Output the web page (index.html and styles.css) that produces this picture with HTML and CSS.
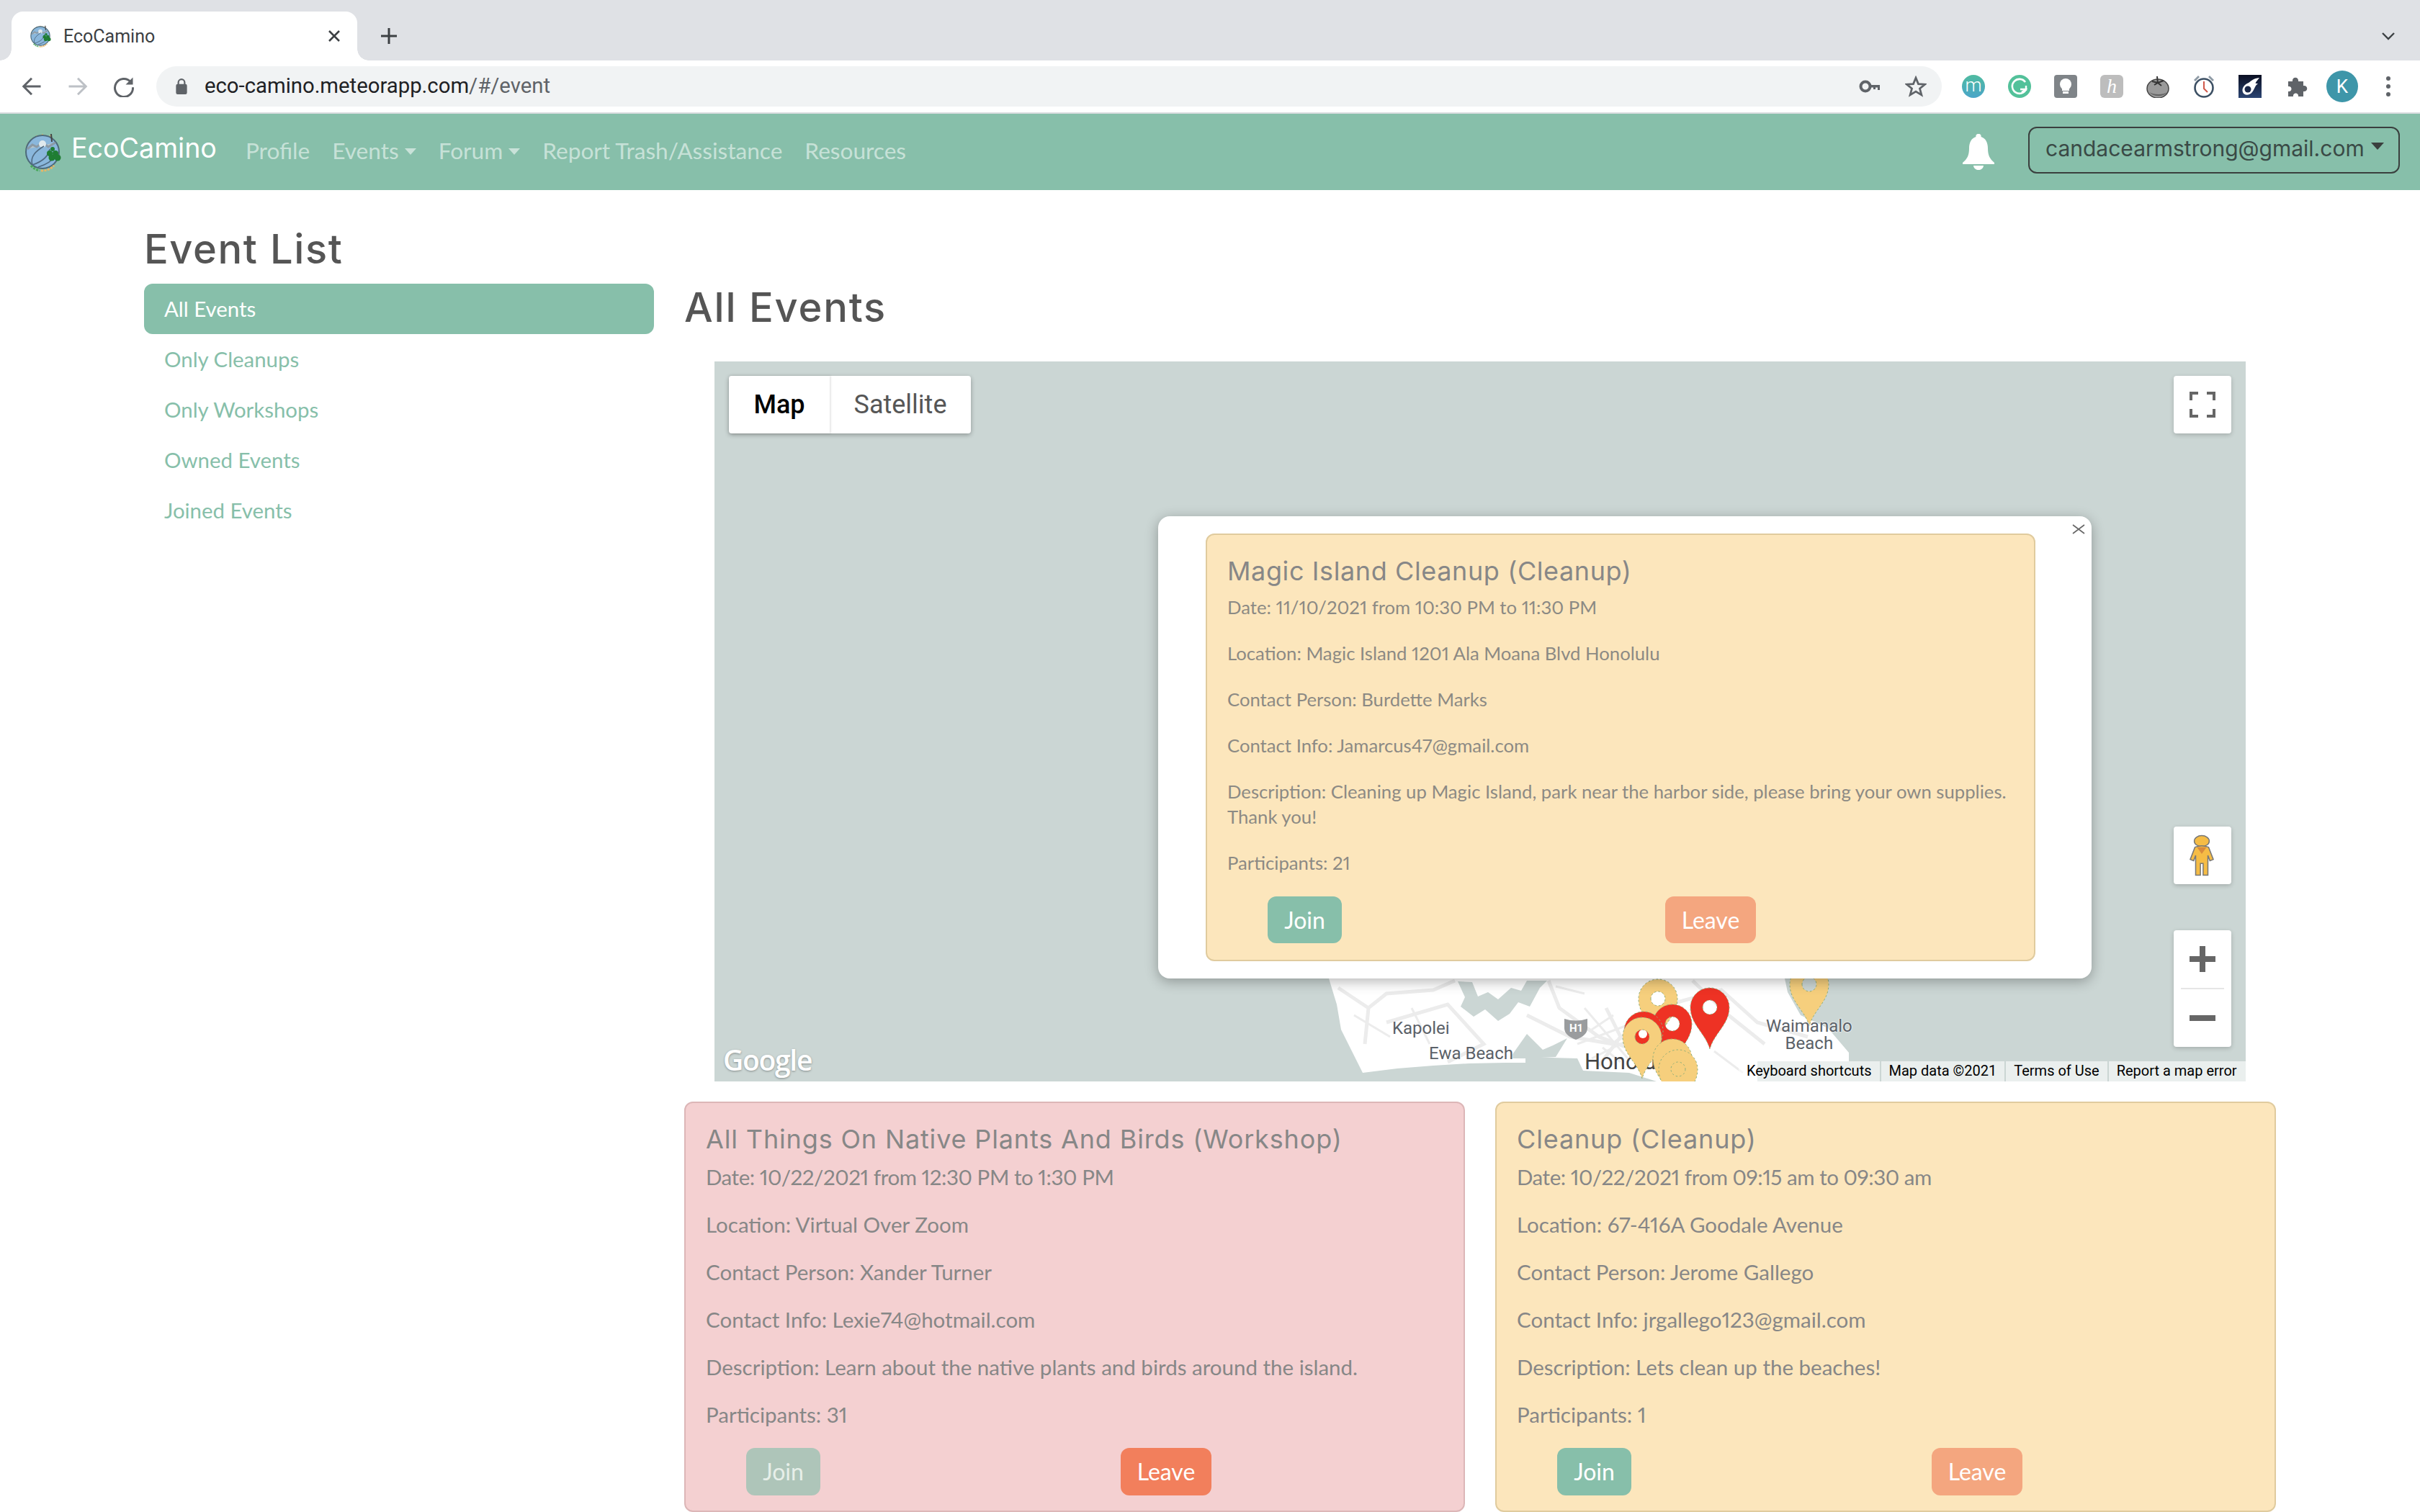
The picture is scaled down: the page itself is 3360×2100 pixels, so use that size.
FILE: index.html
```html
<!DOCTYPE html>
<html lang="en">
<head>
<meta charset="utf-8">
<title>EcoCamino</title>
<link rel="stylesheet" href="styles.css">
</head>
<body>
<svg class="defs" width="0" height="0" aria-hidden="true">
  <defs>
    <symbol id="logo" viewBox="0 0 56 56">
      <path d="M10 17 L14 9 M18 12 L20 5 M27 11 L28 3 M35 12 L39 5" stroke="#e0b96a" stroke-width="1.6" fill="none"/>
      <path d="M6 22 A24 24 0 0 1 38 8" stroke="#d9bd7e" stroke-width="3" fill="none"/>
      <circle cx="28" cy="28" r="23" fill="#8ab7dc" stroke="#4d6a7a" stroke-width="2"/>
      <path d="M7 24 L14 18 L20 21 L28 15 L36 21 L46 15" stroke="#8b9aa6" stroke-width="3" fill="#b9c5c8"/>
      <circle cx="28" cy="17" r="5" fill="#dfe9ee"/>
      <path d="M14 46 C10 34 20 26 30 20 M14 46 C26 42 36 36 38 24 M22 49 C32 46 44 40 44 32" stroke="#4f6a82" stroke-width="1.6" fill="none"/>
      <path d="M40 3 L41 14" stroke="#444" stroke-width="2"/>
      <circle cx="38" cy="30" r="4" fill="#1f7d33"/><circle cx="46" cy="30" r="4" fill="#1f7d33"/>
      <circle cx="42" cy="24" r="3" fill="#1f7d33"/><circle cx="41" cy="36" r="4.5" fill="#1f7d33"/><circle cx="49" cy="36" r="4.5" fill="#1f7d33"/>
      <path d="M12 47 A22 22 0 0 0 24 54" stroke="#49a85a" stroke-width="3" stroke-dasharray="3 1.5" fill="none"/>
      <path d="M26 54 A22 22 0 0 0 44 47" stroke="#e7b565" stroke-width="3" stroke-dasharray="3 1.5" fill="none"/>
    </symbol>
  </defs>
</svg>

<div class="tabstrip">
  <div class="tab">
    <svg class="favicon"><use href="#logo"/></svg>
    <span class="tab-title">EcoCamino</span>
    <svg class="tab-close" viewBox="0 0 20 20"><path d="M3 3 L17 17 M17 3 L3 17" stroke="#3c4043" stroke-width="2.6"/></svg>
  </div>
  <svg class="new-tab" viewBox="0 0 24 24"><path d="M12 1 V23 M1 12 H23" stroke="#3c4043" stroke-width="3"/></svg>
  <svg class="tab-menu" viewBox="0 0 20 12"><path d="M2 2 L10 10 L18 2" stroke="#3c4043" stroke-width="2.4" fill="none"/></svg>
</div>

<div class="toolbar">
  <div class="tool"><svg class="tool-icon" viewBox="0 0 24 24"><path d="M22 12 H4 M12 3 L3 12 L12 21" stroke="#5f6368" stroke-width="2.4" fill="none"/></svg></div>
  <div class="tool"><svg class="tool-icon" viewBox="0 0 24 24"><path d="M2 12 H20 M12 3 L21 12 L12 21" stroke="#bdc1c6" stroke-width="2.4" fill="none"/></svg></div>
  <div class="tool"><svg class="tool-icon" viewBox="0 0 24 24"><path d="M19.5 7 A10 10 0 1 0 22 13" stroke="#5f6368" stroke-width="2.4" fill="none"/><path d="M22 2 V10 H14 Z" fill="#5f6368"/></svg></div>
  <div class="omnibox">
    <svg class="lock" viewBox="0 0 16 22"><path d="M4 9 V6 A4 4 0 0 1 12 6 V9" stroke="#5f6368" stroke-width="2" fill="none"/><rect x="1" y="8" width="14" height="13" rx="2" fill="#5f6368"/></svg>
    <span class="url">eco-camino.meteorapp.com<span class="url-dim">/#/event</span></span>
    <div class="tool omni-first"><svg class="tool-icon" viewBox="0 0 30 24"><circle cx="9" cy="12" r="6.5" stroke="#5f6368" stroke-width="4" fill="none"/><path d="M15 10 H29 V17 H26 V13.5 H23 V16 H20 V13.5 H15 Z" fill="#5f6368"/></svg></div>
    <div class="tool"><svg class="tool-icon" viewBox="0 0 24 24"><path d="M12 2.5 L14.8 9.3 L22 9.8 L16.4 14.4 L18.3 21.5 L12 17.6 L5.7 21.5 L7.6 14.4 L2 9.8 L9.2 9.3 Z" stroke="#5f6368" stroke-width="2.2" fill="none"/></svg></div>
  </div>
  <div class="exts">
    <div class="tool"><span class="ext ext-m">m</span></div>
    <div class="tool"><span class="ext ext-g"><svg viewBox="0 0 32 32"><path d="M24 10 A10 10 0 1 0 25 20 H17" stroke="#fff" stroke-width="2.6" fill="none"/><path d="M25 15 V22 M19 24 L25 20" stroke="#fff" stroke-width="2.4" fill="none"/></svg></span></div>
    <div class="tool"><span class="ext ext-bulb"><svg viewBox="0 0 32 32"><circle cx="16" cy="13" r="8" fill="#fff"/><rect x="11" y="19" width="10" height="3" fill="#fff"/><rect x="12" y="23" width="8" height="3" fill="#fff"/></svg></span></div>
    <div class="tool"><span class="ext ext-h">h</span></div>
    <div class="tool"><svg class="ext" viewBox="0 0 32 32"><ellipse cx="16" cy="19" rx="15" ry="13" fill="#9a9a9a" stroke="#444" stroke-width="1.5"/><path d="M4 24 C10 31 24 31 29 24 C24 28 10 28 4 24Z" fill="#666"/><path d="M15 2 L16 12 M8 9 L16 11 L24 8 M11 14 L16 11 L21 15" stroke="#333" stroke-width="2" fill="none"/></svg></div>
    <div class="tool"><svg class="ext" viewBox="0 0 32 32"><path d="M2 7 L8 1 L10 3 L4 9 Z M30 7 L24 1 L22 3 L28 9 Z" fill="#8f9ba6"/><circle cx="16" cy="18" r="12.5" fill="#fff" stroke="#3d5064" stroke-width="2.6"/><path d="M16 9 V19 L21 24" stroke="#d0584a" stroke-width="2" fill="none"/></svg></div>
    <div class="tool"><svg class="ext" viewBox="0 0 32 32"><defs><linearGradient id="night" x1="0" y1="0" x2="0" y2="1"><stop offset="0" stop-color="#0b0f22"/><stop offset="1" stop-color="#2b4472"/></linearGradient></defs><rect width="32" height="32" fill="url(#night)"/><path d="M29 4 C21 5 18 8 14 11 C8 13 4 19 6 24 C8 29 15 29 19 24 C23 19 22 16 27 12 C23 12 23 12 25 9 Z" fill="#fff"/><circle cx="13" cy="20" r="4.5" fill="#1a2748"/></svg></div>
    <div class="tool"><svg class="ext" viewBox="0 0 32 32"><path d="M5 9 H11 C10 2 20 2 19 9 H26 V15 C33 14 33 24 26 23 V30 H19 C20 24 11 24 12 30 H5 V23 C11 24 11 15 5 16 Z" fill="#5f6368"/></svg></div>
    <div class="tool"><span class="avatar">K</span></div>
    <div class="tool"><svg class="dots" viewBox="0 0 8 32"><circle cx="4" cy="5" r="3" fill="#5f6368"/><circle cx="4" cy="16" r="3" fill="#5f6368"/><circle cx="4" cy="27" r="3" fill="#5f6368"/></svg></div>
  </div>
</div>

<nav class="navbar">
  <svg class="brand-logo"><use href="#logo"/></svg>
  <span class="brand">EcoCamino</span>
  <div class="nav-links">
    <span class="nav-link">Profile</span>
    <span class="nav-link caret">Events</span>
    <span class="nav-link caret">Forum</span>
    <span class="nav-link">Report Trash/Assistance</span>
    <span class="nav-link">Resources</span>
  </div>
  <svg class="bell" viewBox="0 0 44 50"><path d="M22 0 C25 0 26 2 25.5 4 C32 6 35 12 35 20 C35 30 38 35 44 40 V42 H0 V40 C6 35 9 30 9 20 C9 12 12 6 18.5 4 C18 2 19 0 22 0 Z" fill="#fff"/><path d="M15 44 H29 C28 52 16 52 15 44 Z" fill="#fff"/></svg>
  <div class="account caret-dark"><span class="account-name">candacearmstrong@gmail.com</span></div>
</nav>

<main class="page">
  <aside class="sidebar">
    <h1 class="side-title">Event List</h1>
    <div class="side-item is-active">All Events</div>
    <div class="side-item">Only Cleanups</div>
    <div class="side-item">Only Workshops</div>
    <div class="side-item">Owned Events</div>
    <div class="side-item">Joined Events</div>
  </aside>

  <section class="content">
    <h2 class="content-title">All Events</h2>
    <div class="map">
      <svg class="map-art" viewBox="992 502 2126 1000">
        <path class="land" d="M1845 1359 L1856 1395 L1862 1430 L1878 1462 L1892 1490 L1940 1484 L1990 1480 L2040 1477 L2090 1476 L2118 1476 L2118 1468 L2190 1470 L2198 1487 L2262 1490 L2300 1502 L2440 1502 L2440 1474 L2567 1474 L2567 1462 L2538 1428 L2500 1410 L2482 1378 L2478 1359 Z"/>
        <path class="water" d="M2024 1363 L2034 1385 L2028 1398 L2046 1412 L2062 1402 L2080 1418 L2096 1408 L2108 1392 L2124 1398 L2138 1372 L2148 1362 L2120 1362 L2112 1376 L2098 1372 L2080 1388 L2066 1378 L2052 1384 L2044 1364 Z"/>
        <path class="water" d="M2120 1436 L2096 1470 L2118 1470 L2160 1468 L2176 1442 L2156 1452 L2142 1458 L2134 1450 Z"/>
        <path class="road" d="M1858 1372 L1900 1400 L1925 1380 L1990 1375 L2020 1362 M1900 1400 L1895 1450 M1925 1420 L2010 1395 L2060 1450 L2010 1475 M2150 1362 L2165 1400 L2220 1440 L2300 1470 M2120 1410 L2180 1440 L2240 1450 L2300 1400 L2390 1375 L2440 1420 L2510 1440 M2230 1400 L2250 1440 L2220 1480 M2350 1362 L2400 1410 L2450 1450"/>
        <path class="road-thin" d="M2200 1400 L2260 1470 M2190 1450 L2270 1420 M2210 1470 L2290 1430 M2160 1370 L2200 1380 M2380 1460 L2420 1490 M2210 1430 L2240 1410 M2225 1455 L2250 1475 M1880 1410 L1930 1440 M1960 1400 L1985 1450"/>
        <path class="shield" d="M2172 1415 Q2188 1420 2204 1415 L2204 1428 Q2204 1438 2188 1444 Q2172 1438 2172 1428 Z"/>
        <path class="pin pin-yellow" fill-rule="evenodd" d="M2512 1425 C2506 1403 2485 1391 2485 1367 A27 27 0 1 1 2539 1367 C2539 1391 2518 1403 2512 1425 Z M2502 1367 A10 10 0 1 0 2522 1367 A10 10 0 1 0 2502 1367 Z"/>
        <path class="pin pin-yellow" fill-rule="evenodd" d="M2302 1445 C2296 1423 2275 1411 2275 1387 A27 27 0 1 1 2329 1387 C2329 1411 2308 1423 2302 1445 Z M2292 1387 A10 10 0 1 0 2312 1387 A10 10 0 1 0 2292 1387 Z"/>
        <path class="pin pin-red" fill-rule="evenodd" d="M2322 1480 C2316 1458 2295 1446 2295 1422 A27 27 0 1 1 2349 1422 C2349 1446 2328 1458 2322 1480 Z M2312 1422 A10 10 0 1 0 2332 1422 A10 10 0 1 0 2312 1422 Z"/>
        <path class="pin pin-red" fill-rule="evenodd" d="M2374 1457 C2368 1435 2347 1423 2347 1399 A27 27 0 1 1 2401 1399 C2401 1423 2380 1435 2374 1457 Z M2364 1399 A10 10 0 1 0 2384 1399 A10 10 0 1 0 2364 1399 Z"/>
        <path class="pin pin-red" d="M2282 1490 C2276 1468 2255 1456 2255 1432 A27 27 0 1 1 2309 1432 C2309 1456 2288 1468 2282 1490 Z"/>
        <circle cx="2281" cy="1436" r="6" fill="#fff"/>
      </svg>
      <span class="map-label label-kapolei">Kapolei</span>
      <span class="map-label label-ewa">Ewa Beach</span>
      <span class="label-h1">H1</span>
      <span class="map-label label-waima">Waimanalo<br>Beach</span>
      <span class="map-label label-hono">Honolulu</span>
      <svg class="map-art map-over" viewBox="992 502 2126 1000">
        <path class="pin pin-yellow" fill-rule="evenodd" d="M2280 1498 C2274 1476 2253 1464 2253 1440 A27 27 0 1 1 2307 1440 C2307 1464 2286 1476 2280 1498 Z M2270 1440 A10 10 0 1 0 2290 1440 A10 10 0 1 0 2270 1440 Z"/>
        <path class="pin pin-yellow" d="M2322 1528 C2316 1506 2295 1494 2295 1470 A27 27 0 1 1 2349 1470 C2349 1494 2328 1506 2322 1528 Z"/>
        <path class="pin pin-yellow" d="M2330 1543 C2324 1521 2303 1509 2303 1485 A27 27 0 1 1 2357 1485 C2357 1509 2336 1521 2330 1543 Z"/>
        <circle class="pin-ring" cx="2330" cy="1485" r="10"/>
        <path d="M2237 1359 L2277 1359 L2257 1381 Z" fill="#fff"/>
      </svg>

      <div class="map-type">
        <span class="map-type-btn is-on">Map</span>
        <span class="map-type-btn">Satellite</span>
      </div>
      <div class="map-btn fullscreen">
        <svg viewBox="0 0 36 36"><path d="M2 12 V2 H12 M24 2 H34 V12 M2 24 V34 H12 M34 24 V34 H24" stroke="#666" stroke-width="4" fill="none"/></svg>
      </div>
      <div class="map-btn pegman">
        <svg viewBox="0 0 36 60"><ellipse cx="18" cy="9" rx="11" ry="8" fill="#f5bc45" stroke="#777" stroke-width="1.6"/><path d="M8 18 Q18 14 28 18 L35 36 L30 38 L27 30 L27 59 H20 V42 H16 V59 H9 V30 L6 38 L1 36 Z" fill="#f5bc45" stroke="#777" stroke-width="1.6"/><path d="M11 18 L18 28 L25 18 Z" fill="#d98b3c"/></svg>
      </div>
      <div class="map-zoom">
        <div class="zoom-part"><svg viewBox="0 0 36 36"><rect x="14" y="0" width="8" height="36" fill="#666"/><rect x="0" y="14" width="36" height="8" fill="#666"/></svg></div>
        <div class="zoom-line"></div>
        <div class="zoom-part"><svg viewBox="0 0 36 36"><rect x="0" y="14" width="36" height="8" fill="#666"/></svg></div>
      </div>
      <span class="google">Google</span>
      <div class="attrib">
        <span class="attrib-item">Keyboard shortcuts</span>
        <span class="attrib-item">Map data ©2021</span>
        <span class="attrib-item">Terms of Use</span>
        <span class="attrib-item">Report a map error</span>
      </div>

      <div class="popup">
        <svg class="popup-close" viewBox="0 0 20 14"><path d="M2 1 L18 13 M18 1 L2 13" stroke="#666" stroke-width="1.6"/></svg>
        <article class="card card-yellow card-popup">
          <h3 class="card-title">Magic Island Cleanup (Cleanup)</h3>
          <p class="card-line">Date: 11/10/2021 from 10:30 PM to 11:30 PM</p>
          <p class="card-line">Location: Magic Island 1201 Ala Moana Blvd Honolulu</p>
          <p class="card-line">Contact Person: Burdette Marks</p>
          <p class="card-line">Contact Info: Jamarcus47@gmail.com</p>
          <p class="card-line">Description: Cleaning up Magic Island, park near the harbor side, please bring your own supplies. Thank you!</p>
          <p class="card-line">Participants: 21</p>
          <div class="actions">
            <span class="btn btn-join">Join</span>
            <span class="btn btn-leave btn-soft">Leave</span>
          </div>
        </article>
      </div>
    </div>

    <div class="cards">
      <article class="card card-pink">
        <h3 class="card-title">All Things On Native Plants And Birds (Workshop)</h3>
        <p class="card-line card-date">Date: 10/22/2021 from 12:30 PM to 1:30 PM</p>
        <p class="card-line">Location: Virtual Over Zoom</p>
        <p class="card-line">Contact Person: Xander Turner</p>
        <p class="card-line">Contact Info: Lexie74@hotmail.com</p>
        <p class="card-line">Description: Learn about the native plants and birds around the island.</p>
        <p class="card-line">Participants: 31</p>
        <div class="actions">
          <span class="btn btn-join btn-muted">Join</span>
          <span class="btn btn-leave">Leave</span>
        </div>
      </article>
      <article class="card card-yellow">
        <h3 class="card-title">Cleanup (Cleanup)</h3>
        <p class="card-line card-date">Date: 10/22/2021 from 09:15 am to 09:30 am</p>
        <p class="card-line">Location: 67-416A Goodale Avenue</p>
        <p class="card-line">Contact Person: Jerome Gallego</p>
        <p class="card-line">Contact Info: jrgallego123@gmail.com</p>
        <p class="card-line">Description: Lets clean up the beaches!</p>
        <p class="card-line">Participants: 1</p>
        <div class="actions">
          <span class="btn btn-join">Join</span>
          <span class="btn btn-leave btn-soft">Leave</span>
        </div>
      </article>
    </div>
  </section>
</main>
</body>
</html>
```

FILE: styles.css
```css
* { box-sizing: border-box; }
html, body { margin: 0; padding: 0; }
body {
  width: 3360px;
  height: 2100px;
  overflow: hidden;
  background: #fff;
  font-family: "Lato", "Open Sans", sans-serif;
  font-variant-numeric: proportional-nums;
  color: #555;
}
.defs { position: absolute; }

/* browser chrome */
.tabstrip {
  height: 84px;
  background: #dfe1e5;
  display: flex;
  align-items: flex-end;
  padding-left: 16px;
  position: relative;
}
.tab {
  width: 480px;
  height: 68px;
  background: #fff;
  border-radius: 16px 16px 0 0;
  display: flex;
  align-items: center;
  padding-left: 24px;
  position: relative;
}
.tab::before, .tab::after {
  content: "";
  position: absolute;
  bottom: 0;
  width: 16px;
  height: 16px;
}
.tab::before { left: -16px; background: radial-gradient(circle at 0 0, transparent 15.5px, #fff 16px); }
.tab::after { right: -16px; background: radial-gradient(circle at 100% 0, transparent 15.5px, #fff 16px); }
.favicon { width: 32px; height: 32px; flex: none; }
.tab-title {
  margin-left: 16px;
  font: 25px/1 "Roboto", sans-serif;
  color: #3c4043;
  flex: 1;
}
.tab-close { width: 20px; height: 20px; margin-right: 22px; }
.new-tab { width: 24px; height: 24px; margin: 0 0 22px 32px; }
.tab-menu { width: 20px; height: 12px; position: absolute; right: 34px; top: 44px; }

.toolbar {
  height: 74px;
  background: #fff;
  border-bottom: 2px solid #dadce0;
  display: flex;
  align-items: center;
  padding-left: 12px;
}
.tool {
  width: 64px;
  height: 56px;
  display: flex;
  align-items: center;
  justify-content: center;
  flex: none;
}
.tool-icon { width: 30px; height: 30px; }
.omnibox {
  margin-left: 13px;
  width: 2479px;
  height: 56px;
  background: #f1f3f4;
  border-radius: 28px;
  display: flex;
  align-items: center;
  padding: 0 4px 0 26px;
}
.lock { width: 18px; height: 24px; flex: none; }
.url {
  margin-left: 23px;
  font: 29.3px/1 "Roboto", sans-serif;
  color: #202124;
  flex: 1;
}
.url-dim { color: #5f6368; }
.exts { display: flex; margin-left: 12px; }
.ext {
  width: 32px;
  height: 32px;
  display: flex;
  align-items: center;
  justify-content: center;
  font: 300 26px/1 "Roboto", sans-serif;
  color: #fff;
}
.ext svg { width: 32px; height: 32px; }
.ext-m { border-radius: 50%; background: linear-gradient(#4fbba0, #4aa5c9); padding-bottom: 4px; }
.ext-g { border-radius: 50%; background: #53c19a; }
.ext-bulb { border-radius: 4px; background: #7f8488; }
.ext-h { border-radius: 6px; background: #bdbdbd; font: italic 28px/1 "Liberation Serif", serif; }
.avatar {
  width: 44px;
  height: 44px;
  border-radius: 50%;
  background: #3e96a9;
  color: #fff;
  font: 26px/44px "Roboto", sans-serif;
  text-align: center;
}
.dots { width: 8px; height: 32px; }

/* navbar */
.navbar {
  height: 106px;
  background: #87bfaa;
  display: flex;
  align-items: center;
  padding: 0 28px 0 31px;
}
.brand-logo { width: 56px; height: 56px; flex: none; }
.brand {
  margin-left: 12px;
  margin-top: -10px;
  font: 37.6px/1 "Inter", sans-serif;
  color: #fff;
}
.nav-links { display: flex; gap: 31px; margin-left: 40px; margin-top: -4px; }
.nav-link { font-size: 31.6px; line-height: 36px; color: rgba(255,255,255,.55); }
.caret::after {
  content: "";
  display: inline-block;
  margin-left: 8px;
  vertical-align: 6px;
  border-top: 9px solid rgba(255,255,255,.55);
  border-left: 8px solid transparent;
  border-right: 8px solid transparent;
}
.bell { width: 44px; height: 50px; margin-left: auto; margin-right: 47px; }
.account {
  width: 516px;
  height: 65px;
  margin-bottom: 5px;
  border: 2px solid #3a3f3e;
  border-radius: 12px;
  display: flex;
  align-items: center;
  padding-left: 22px;
  font: 30px/1 "Inter", sans-serif;
  color: #3a4a46;
  white-space: nowrap;
}
.account-name { margin-top: -5px; }
.caret-dark::after {
  content: "";
  margin-left: 9px;
  margin-top: -12px;
  border-top: 10px solid #3a3f3e;
  border-left: 9px solid transparent;
  border-right: 9px solid transparent;
}

/* page */
.page {
  display: flex;
  gap: 42px;
  padding-left: 200px;
  width: 3160px;
}
.sidebar { width: 708px; flex: none; padding-top: 47px; }
.side-title {
  margin: 0 0 13px;
  height: 70px;
  font: 500 56px/70px "Inter", sans-serif;
  letter-spacing: 1.6px;
  color: #555;
}
.side-item {
  height: 70px;
  line-height: 70px;
  padding-left: 28px;
  border-radius: 12px;
  font-size: 29.4px;
  color: #87bfaa;
}
.side-item.is-active { background: #87bfaa; color: #fff; }

.content { flex: 1; min-width: 0; padding-top: 128px; }
.content-title {
  margin: 0 0 40px;
  height: 70px;
  font: 500 56px/70px "Inter", sans-serif;
  letter-spacing: 1.8px;
  color: #555;
}

/* map */
.map {
  position: relative;
  margin: 0 42px 28px;
  height: 1000px;
  background: #cbd6d4;
  overflow: hidden;
}
.map-art { position: absolute; left: 0; top: 0; width: 2126px; height: 1000px; }
.land { fill: #fff; }
.water { fill: #cbd6d4; }
.road { fill: none; stroke: #ececec; stroke-width: 5; }
.road-thin { fill: none; stroke: #ececec; stroke-width: 3; }
.shield { fill: #9a9c9e; }
.pin { stroke: #8fae7a; stroke-width: 1; stroke-dasharray: 2.5 3; }
.pin-yellow { fill: #f6cf7d; }
.pin-red { fill: #ee3224; }
.pin-ring { fill: none; stroke: #8fae7a; stroke-width: 1; stroke-dasharray: 2.5 3; }
.map-label {
  position: absolute;
  font: 24px/24px "Roboto", sans-serif;
  color: #5b6168;
  text-align: center;
  text-shadow: 0 0 2px #fff, 0 0 2px #fff;
  white-space: nowrap;
}
.label-kapolei { left: 941px; top: 914px; }
.label-ewa { left: 992px; top: 949px; }
.label-waima { left: 1460px; top: 911px; }
.label-hono { left: 1208px; top: 957px; font-size: 31px; line-height: 32px; color: #444; }
.label-h1 {
  position: absolute;
  left: 1187px;
  top: 917px;
  width: 18px;
  font: 700 15px/18px "Roboto", sans-serif;
  color: #fff;
  text-align: center;
}
.map-over { z-index: 1; }

.map-type {
  position: absolute;
  z-index: 2;
  left: 20px;
  top: 20px;
  height: 80px;
  display: flex;
  background: #fff;
  border-radius: 4px;
  box-shadow: 0 2px 6px rgba(0,0,0,.3);
}
.map-type-btn {
  font: 36px/80px "Roboto", sans-serif;
  color: #565656;
  text-align: center;
  width: 196px;
}
.map-type-btn.is-on {
  width: 140px;
  font-weight: 500;
  color: #000;
  box-shadow: 1px 0 3px rgba(0,0,0,.15);
}
.map-btn {
  position: absolute;
  z-index: 2;
  left: 2026px;
  width: 80px;
  height: 80px;
  background: #fff;
  border-radius: 4px;
  box-shadow: 0 2px 6px rgba(0,0,0,.2);
  display: flex;
  align-items: center;
  justify-content: center;
}
.fullscreen { top: 20px; }
.fullscreen svg { width: 36px; height: 36px; }
.pegman { top: 646px; }
.pegman svg { width: 34px; height: 58px; margin-left: -2px; }
.map-zoom {
  position: absolute;
  z-index: 2;
  left: 2026px;
  top: 790px;
  width: 80px;
  height: 162px;
  background: #fff;
  border-radius: 4px;
  box-shadow: 0 2px 6px rgba(0,0,0,.2);
  display: flex;
  flex-direction: column;
  align-items: center;
}
.zoom-part { height: 80px; display: flex; align-items: center; justify-content: center; }
.zoom-part svg { width: 36px; height: 36px; }
.zoom-line { width: 60px; height: 2px; background: #e6e6e6; }
.google {
  position: absolute;
  z-index: 2;
  left: 12px;
  top: 948px;
  font: 600 39px/44px "Open Sans", sans-serif;
  letter-spacing: -1.3px;
  color: #fff;
  text-shadow: 0 1px 3px rgba(0,0,0,.35);
}
.attrib {
  position: absolute;
  z-index: 2;
  right: 0;
  bottom: 0;
  left: 1422px;
  height: 28px;
  display: flex;
  gap: 2px;
  font: 20px/26px "Roboto", sans-serif;
  color: #000;
}
.attrib-item {
  background: rgba(255,255,255,.6);
  padding: 0 11px;
  white-space: nowrap;
}
.attrib-item:last-child { flex: 1; }

/* popup */
.popup {
  position: absolute;
  z-index: 3;
  left: 616px;
  top: 215px;
  width: 1296px;
  height: 642px;
  background: #fff;
  border-radius: 16px;
  padding: 24px 78px 0 66px;
  box-shadow: 0 4px 18px rgba(0,0,0,.3);
}
.popup-close { position: absolute; right: 8px; top: 11px; width: 20px; height: 14px; }

/* cards */
.cards { display: grid; grid-template-columns: 1fr 1fr; gap: 42px; }
.card {
  border: 2px solid;
  border-radius: 12px;
  height: 570px;
  padding: 26px 28px 0;
  color: #878787;
}
.card-pink { background: #f4d0d1; border-color: #dcb6b7; }
.card-yellow { background: #fce6bc; border-color: #e0cb9e; }
.card-title {
  margin: 0 0 11px;
  height: 48px;
  font: 400 36px/48px "Inter", sans-serif;
  letter-spacing: .85px;
}
.card-line { margin: 0 0 30px; font-size: 29.5px; line-height: 36px; }
.card-date { letter-spacing: -.45px; }
.actions {
  display: grid;
  grid-template-columns: 520px auto;
  justify-content: start;
  padding-left: 56px;
  margin-top: -2px;
}
.btn {
  height: 66px;
  border-radius: 12px;
  font-size: 32px;
  line-height: 66px;
  text-align: center;
  color: #fff;
  justify-self: start;
}
.btn-join { width: 103px; background: #87bfaa; }
.btn-muted { background: #aec5b9; color: #e7efe9; }
.btn-leave { width: 126px; background: #f27f5c; }
.btn-soft { background: #f4a67f; }

.card-popup {
  height: 594px;
  padding: 28px 28px 0;
}
.card-popup .card-title { height: 44px; margin-bottom: 11px; letter-spacing: .6px; line-height: 44px; }
.card-popup .card-line { font-size: 25.7px; line-height: 35px; margin-bottom: 29px; color: #8c8a84; }
.card-popup .actions { grid-template-columns: 552px auto; padding-left: 56px; margin-top: 0; }
.card-popup .btn { height: 65px; line-height: 65px; }
```
